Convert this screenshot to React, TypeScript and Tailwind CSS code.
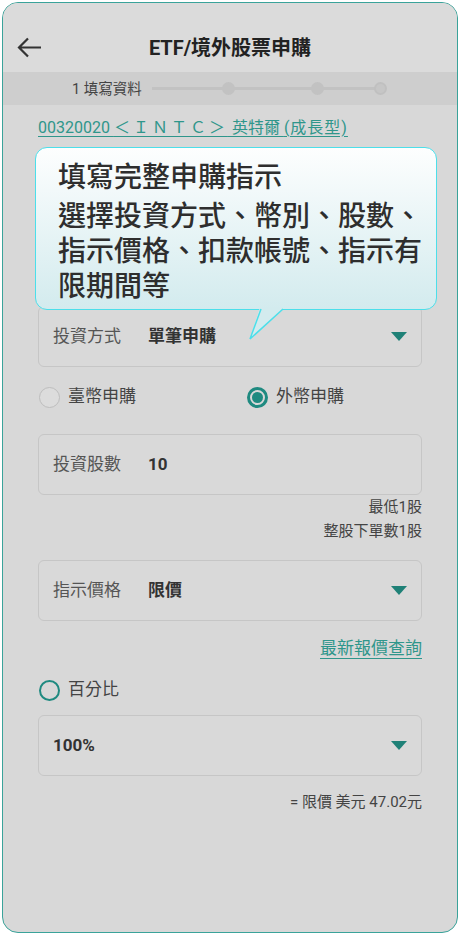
import React from 'react';

const font = "font-['Roboto','Noto_Sans_CJK_TC',sans-serif]";

function Caret() {
  return (
    <svg width="16" height="9" viewBox="0 0 16 9" className="shrink-0">
      <path d="M0 0 H16 L8 9 Z" fill="#1f8177" />
    </svg>
  );
}

function Field({ label, value, caret }: { label?: string; value: string; caret?: boolean }) {
  return (
    <div className="h-[61px] rounded-[6px] border border-[#c6c6c6] bg-[#d9d9d9] flex items-center pl-[14px] pr-[14px]">
      {label && <span className="w-[95px] shrink-0 text-[17px] text-[#555]">{label}</span>}
      <span className="flex-1 text-[17px] font-bold text-[#333]">{value}</span>
      {caret && <Caret />}
    </div>
  );
}

function Radio({ checked, teal, label }: { checked?: boolean; teal?: boolean; label: string }) {
  return (
    <div className="flex items-center gap-[8px] h-[24px]">
      {checked ? (
        <span className="w-[21px] h-[21px] rounded-full border-[3px] border-[#1f8a80] flex items-center justify-center">
          <span className="w-[11px] h-[11px] rounded-full bg-[#1f8a80]" />
        </span>
      ) : teal ? (
        <span className="w-[21px] h-[21px] rounded-full border-2 border-[#1f8a80]" />
      ) : (
        <span className="w-[21px] h-[21px] rounded-full border border-[#bdbdbd] bg-[#dcdcdc]" />
      )}
      <span className="text-[17px] text-[#444]">{label}</span>
    </div>
  );
}

export default function App() {
  return (
    <div className={`w-[460px] h-[935px] bg-white p-[2px] ${font}`}>
      <div className="relative h-full rounded-[16px] border border-[#3aa39a] bg-[#d8d8d8] overflow-hidden">
        {/* header */}
        <div className="h-[69px] pt-[20px] flex items-center bg-[#dbdbdb] px-[14px]">
          <svg width="25" height="21" viewBox="0 0 25 21" className="shrink-0">
            <path d="M2 10.5 H24 M11 1.5 L2 10.5 L11 19.5" fill="none" stroke="#333" strokeWidth="2.2" />
          </svg>
          <div className="flex-1 text-center text-[20px] font-bold text-[#222] pr-[25px]">ETF/境外股票申購</div>
        </div>

        {/* steps */}
        <div className="h-[33px] bg-[#cecece] flex items-center pl-[69px]">
          <span className="text-[14.5px] text-[#444] pt-[2px]">1 填寫資料</span>
          <div className="relative ml-[10px] w-[233px] h-[13px] flex items-center">
            <div className="w-full h-[3px] bg-[#c2c2c2]" />
            <span className="absolute left-[70px] top-0 w-[13px] h-[13px] rounded-full bg-[#c2c2c2]" />
            <span className="absolute left-[159px] top-0 w-[13px] h-[13px] rounded-full bg-[#c2c2c2]" />
            <span className="absolute left-[222px] top-0 w-[13px] h-[13px] rounded-full bg-[#c6c6c6] border-2 border-[#c0c0c0]" />
          </div>
        </div>

        <div className="px-[35px]">
          <div className="mt-[12px] leading-[22px] text-[16px] text-[#2f968b] underline underline-offset-[3px] whitespace-nowrap">
            00320020 <span className="tracking-[3px]">＜ＩＮＴＣ＞</span> 英特爾 <span className="tracking-[1px]">(成長型)</span>
          </div>

          <div className="mt-[167px]">
            <Field label="投資方式" value="單筆申購" caret />
          </div>

          <div className="mt-[18px] flex items-center">
            <div className="w-[209px] pl-[1px]">
              <Radio label="臺幣申購" />
            </div>
            <Radio checked label="外幣申購" />
          </div>

          <div className="mt-[25px]">
            <Field label="投資股數" value="10" />
          </div>
          <div className="text-right text-[15px] leading-[24px] text-[#444]">
            <div>最低1股</div>
            <div>整股下單數1股</div>
          </div>

          <div className="mt-[17px]">
            <Field label="指示價格" value="限價" caret />
          </div>

          <div className="mt-[15px] text-right text-[17px] leading-[24px] text-[#2f968b] underline underline-offset-[4px]">
            最新報價查詢
          </div>

          <div className="mt-[18px] pl-[1px]">
            <Radio teal label="百分比" />
          </div>

          <div className="mt-[13px]">
            <Field value="100%" caret />
          </div>

          <div className="mt-[14px] text-right text-[15px] leading-[24px] text-[#444]">= 限價 美元 47.02元</div>
        </div>

        {/* callout */}
        <div className="absolute left-[32px] top-[144px] w-[402px] h-[163px] rounded-[12px] border-[1.5px] border-[#4cdfea] bg-gradient-to-b from-[#fdfefe] to-[#d3ebee] pl-[22px] pt-[12px] text-[28px] font-medium leading-[35px] text-[#2e2e2e]">
          <div className="mb-[4px]">填寫完整申購指示</div>
          <div>選擇投資方式、幣別、股數、</div>
          <div>指示價格、扣款帳號、指示有</div>
          <div>限期間等</div>
          <svg width="44" height="36" viewBox="0 0 44 36" className="absolute left-[210px] top-[159px]">
            <path d="M14 0 L4 32 L39 0 Z" fill="#d3ebee" />
            <path d="M15 2 L4 32 L37 2" fill="none" stroke="#4cdfea" strokeWidth="1.5" />
          </svg>
        </div>
      </div>
    </div>
  );
}
